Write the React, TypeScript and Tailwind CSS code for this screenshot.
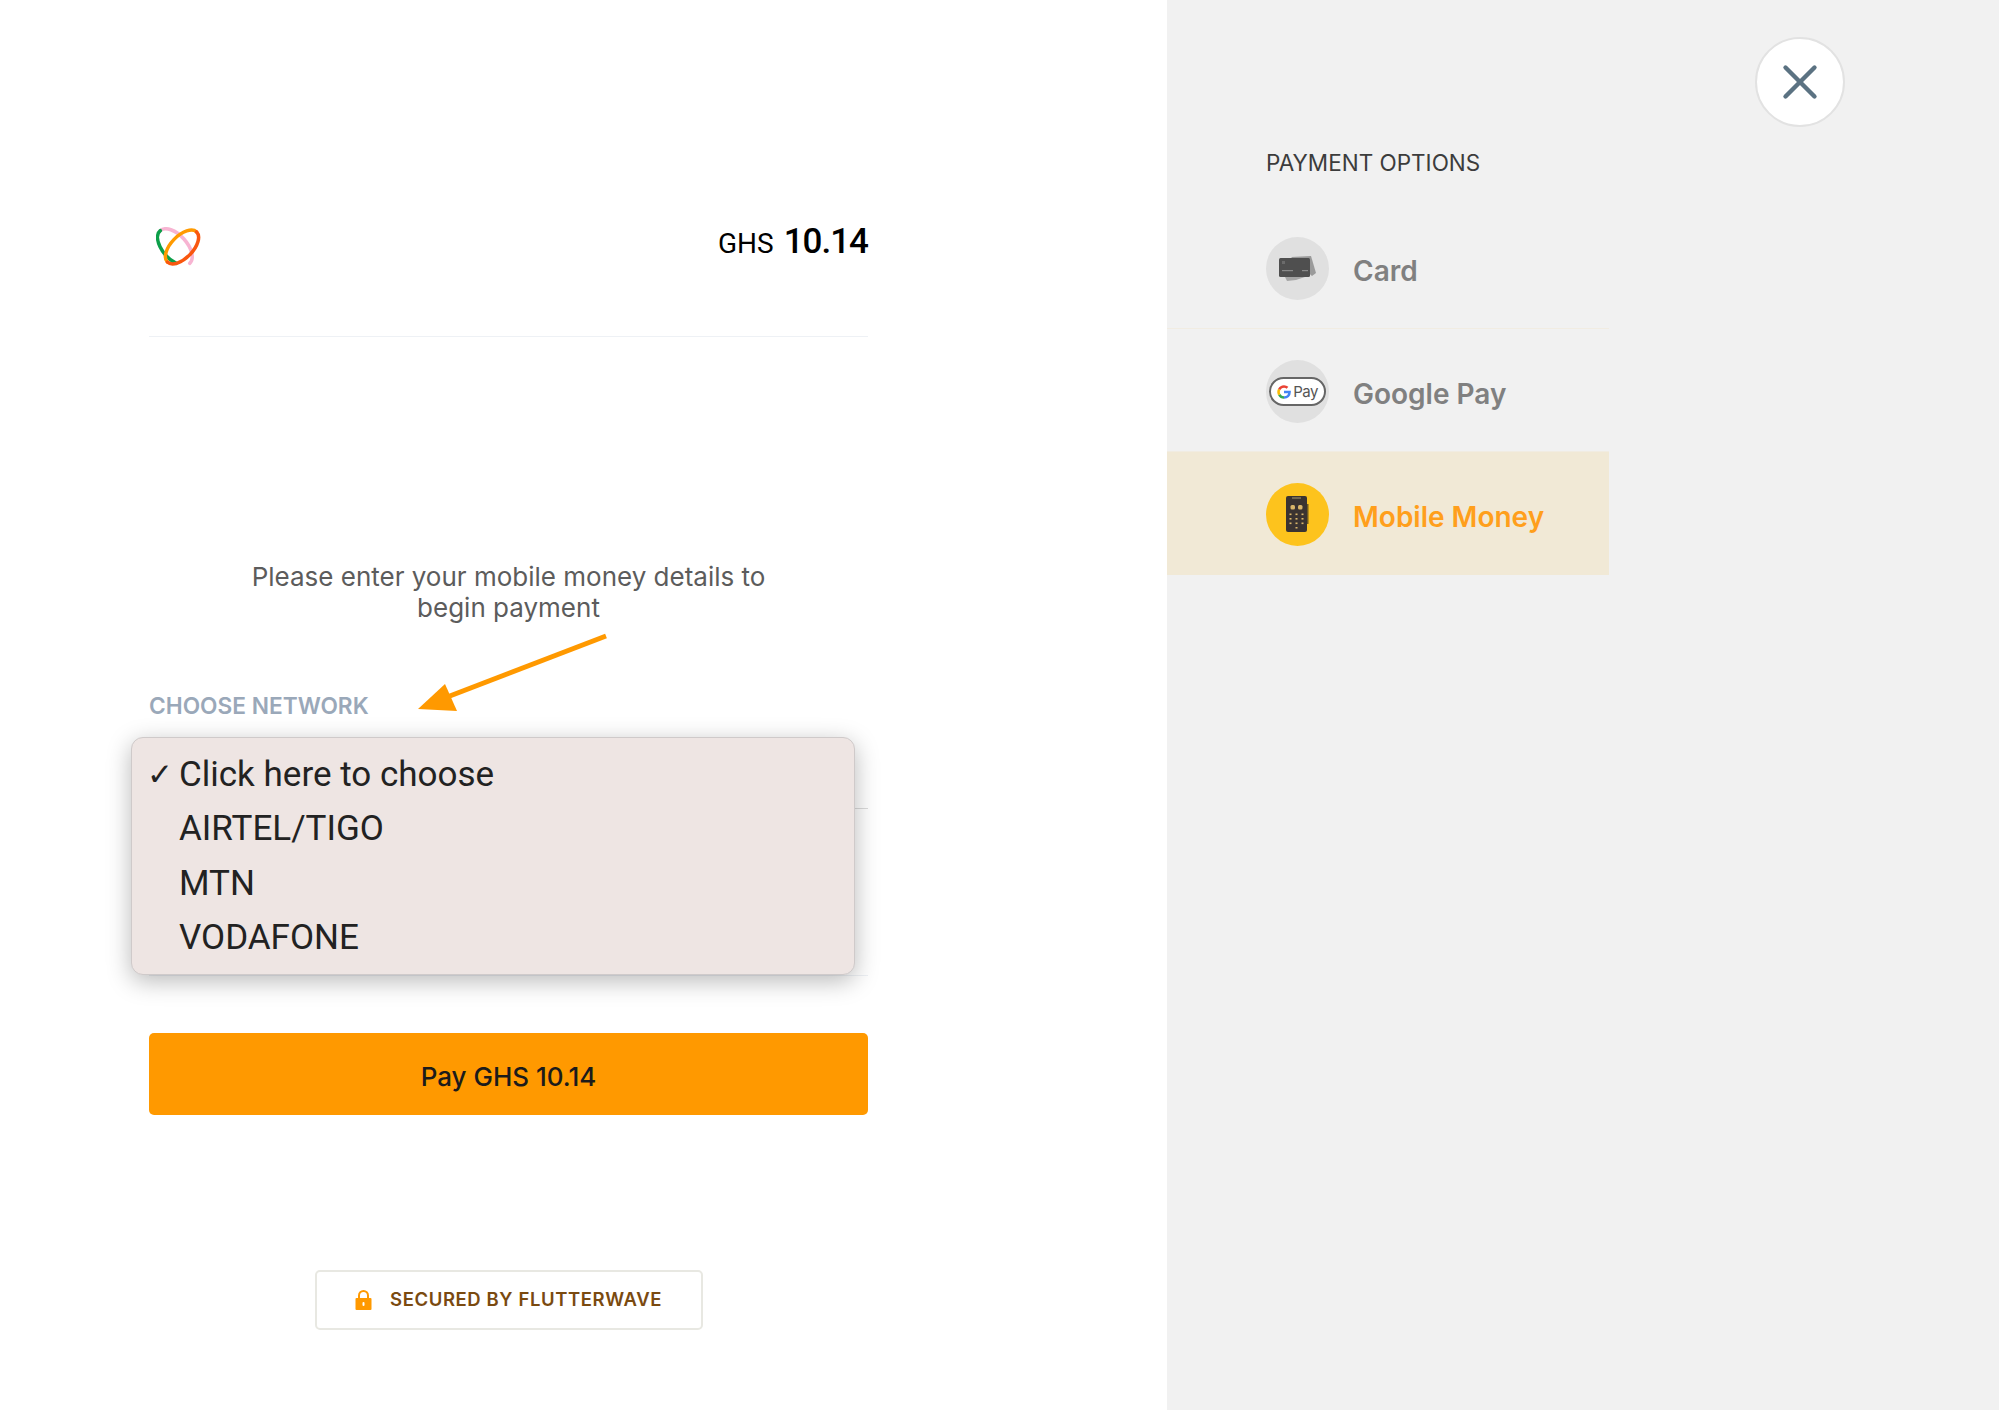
import { X } from "lucide-react";

const Logo = () => (
  <svg width="46" height="40" viewBox="0 0 46 40" fill="none" strokeWidth="3.500" strokeLinecap="round">
    <g transform="rotate(48 19 20)">
      <path d="M-3 20A22 12 0 0 1 41 20" stroke="#f7b4d2" />
      <path d="M-3 20A22 12 0 0 0 32 30" stroke="#0c9f49" />
    </g>
    <g transform="rotate(-46 26 20)">
      <path d="M5 20A21 11 0 0 1 47 20" stroke="#ff9a00" />
      <path d="M47 20A21 11 0 0 1 5 20" stroke="#f9570f" />
    </g>
  </svg>
);

const CardIcon = () => (
  <svg width="38" height="26" viewBox="0 0 38 26">
    <path d="M12 1 32 0l5 17-4 3z" fill="#9a9a9a" />
    <rect x="0" y="2" width="31" height="19" rx="1.500" fill="#4f4f4f" />
    <rect x="3" y="14" width="11" height="1.200" fill="#8a8a8a" />
    <rect x="23" y="14" width="6" height="1.200" fill="#8a8a8a" />
    <rect x="3" y="5" width="3" height="3" fill="#6b6b6b" />
    <path d="M6 21h20l-9 3-9 1z" fill="#a5a5a5" />
  </svg>
);

const GoogleMark = () => (
  <svg width="14" height="14" viewBox="0 0 24 24" fill="none" strokeWidth="4.400">
    <path d="M12 12h9.500c0 6-4 9.500-9.500 9.500" stroke="#4285f4" />
    <path d="M12 21.500c-3.500 0-6.500-2-8.200-5" stroke="#34a853" />
    <path d="M3.800 16.500a10 10 0 0 1 0-9" stroke="#fbbc05" />
    <path d="M3.800 7.500C5.500 4.500 8.500 2.500 12 2.500c2.500 0 4.500 1 6 2.300" stroke="#ea4335" />
  </svg>
);

const PhoneIcon = () => (
  <svg width="23" height="37" viewBox="0 0 23 37">
    <rect x="0" y="0" width="21" height="36" rx="2" fill="#3a3331" />
    <rect x="21" y="8" width="1.500" height="20" fill="#6f5a20" />
    <rect x="6" y="1.500" width="9" height="1" fill="#a89a70" />
    <rect x="4.500" y="9" width="4.500" height="4.500" rx="1.500" fill="#d9b66a" />
    <rect x="12" y="9" width="4.500" height="4.500" rx="1.500" fill="#d9b66a" />
    {[17.500, 22, 26.500].map((y) =>
      [4.500, 10.500, 16.500].map((x) => <rect key={`${x}-${y}`} x={x - 1} y={y} width="2" height="1.600" fill="#d9b66a" />),
    )}
    <rect x="9.500" y="31" width="2" height="1.500" fill="#d9b66a" />
  </svg>
);

const LockIcon = () => (
  <svg width="17" height="20" viewBox="0 0 17 20" fill="none">
    <path d="M4 9V5.500a4.500 4.500 0 0 1 9 0V9" stroke="#ff9900" strokeWidth="2" />
    <rect x="0.500" y="8" width="16" height="12" rx="1" fill="#ff9900" />
    <rect x="7.500" y="12" width="2" height="4" rx="1" fill="#fff" />
  </svg>
);

const options = [
  { label: "Card", icon: <CardIcon /> },
  {
    label: "Google Pay",
    icon: (
      <div className="flex h-[29px] w-[57px] shrink-0 items-center justify-center gap-[2px] rounded-full border-2 border-[#666] bg-white">
        <GoogleMark />
        <span className="text-[15px] leading-none tracking-[-0.5px] text-[#555]">Pay</span>
      </div>
    ),
  },
];

const networks = ["AIRTEL/TIGO", "MTN", "VODAFONE"];

export default function App() {
  return (
    <div className="flex h-[1410px] bg-white font-['Inter',sans-serif]">
      <main className="relative w-[1167px] pl-[149px]">
        <div className="flex h-[337px] w-[719px] items-start justify-between border-b border-[#eef1f5] pl-[7px] pt-[227px]">
          <Logo />
          <div className="flex items-baseline gap-[10px] font-['Roboto',sans-serif] text-black">
            <span className="text-[28px] leading-[30px]">GHS</span>
            <span className="text-[35px] font-medium leading-[30px] tracking-[-1px]">10.14</span>
          </div>
        </div>

        <p className="mt-[224px] w-[719px] text-center text-[26px] leading-[31px] text-[#5c5c5c]">
          Please enter your mobile money details to
          <br />
          begin payment
        </p>

        <h2 className="mt-[69px] text-[22.700px] font-semibold leading-[28px] text-[#9aa8b9]">CHOOSE NETWORK</h2>

        <div className="mt-[88px] w-[719px] border-b border-[#dcdcdc]" />
        <div className="mt-[166px] w-[719px] border-b border-[#eef1f5]" />

        <button className="mt-[57px] h-[82px] w-[719px] rounded-[5px] bg-[#ff9900] pt-[4px] text-[26px] font-medium text-[#1b1b1b]">
          Pay GHS 10.14
        </button>

        <div className="ml-[166px] mt-[155px] flex h-[60px] w-[388px] items-center gap-[18px] rounded-[5px] border-2 border-[#e8e8e2] pl-[38px]">
          <LockIcon />
          <span className="text-[18.500px] font-semibold tracking-[0.6px] text-[#7a4a10]">SECURED BY FLUTTERWAVE</span>
        </div>

        {/* annotation arrow */}
        <svg className="absolute left-[410px] top-[630px]" width="205" height="85" viewBox="0 0 205 85" fill="none">
          <path d="M196 6 32 69" stroke="#ff9900" strokeWidth="5" />
          <path d="M8 79 35 54l12 27z" fill="#ff9900" />
        </svg>

        {/* open native select menu */}
        <ul className="absolute left-[131px] top-[737px] flex h-[238px] w-[724px] flex-col justify-center rounded-[12px] border border-[#cfcaca] bg-[#eee5e3] pt-[1px] font-['Roboto',sans-serif] text-[35px] leading-[54.500px] text-[#222] shadow-[0_6px_24px_rgba(0,0,0,0.28)]">
          <li className="relative pl-[47px]">
            <span className="absolute left-[15px] top-0 text-[31px] font-medium">✓</span>
            Click here to choose
          </li>
          {networks.map((n) => (
            <li key={n} className="pl-[47px]">
              {n}
            </li>
          ))}
        </ul>
      </main>

      <aside className="relative flex-1 bg-[#f1f1f1]">
        <button className="absolute left-[588px] top-[37px] flex h-[90px] w-[90px] items-center justify-center rounded-full border-2 border-[#e2e2e2] bg-white">
          <X size={58} strokeWidth={1.800} className="text-[#5b7282]" />
        </button>

        <h2 className="pl-[99px] pt-[149px] text-[22.500px] leading-[28px] text-[#3c3c3c]">PAYMENT OPTIONS</h2>

        <div className="mt-[29px] w-[442px]">
          {options.map((o) => (
            <div key={o.label} className="flex h-[123px] items-center gap-[24px] border-b border-[#f1ece2] pl-[99px] pt-[3px]">
              <div className="flex h-[63px] w-[63px] items-center justify-center rounded-full bg-[#e0e0e0]">{o.icon}</div>
              <span className="mt-[5px] text-[28px] font-semibold text-[#808080]">{o.label}</span>
            </div>
          ))}
          <div className="flex h-[123px] items-center gap-[24px] bg-[#f1e9d6] pl-[99px] pt-[1px]">
            <div className="flex h-[63px] w-[63px] items-center justify-center rounded-full bg-[#fdc31d]">
              <PhoneIcon />
            </div>
            <span className="mt-[6px] text-[28px] font-semibold text-[#ff9f1c]">Mobile Money</span>
          </div>
        </div>
      </aside>
    </div>
  );
}
